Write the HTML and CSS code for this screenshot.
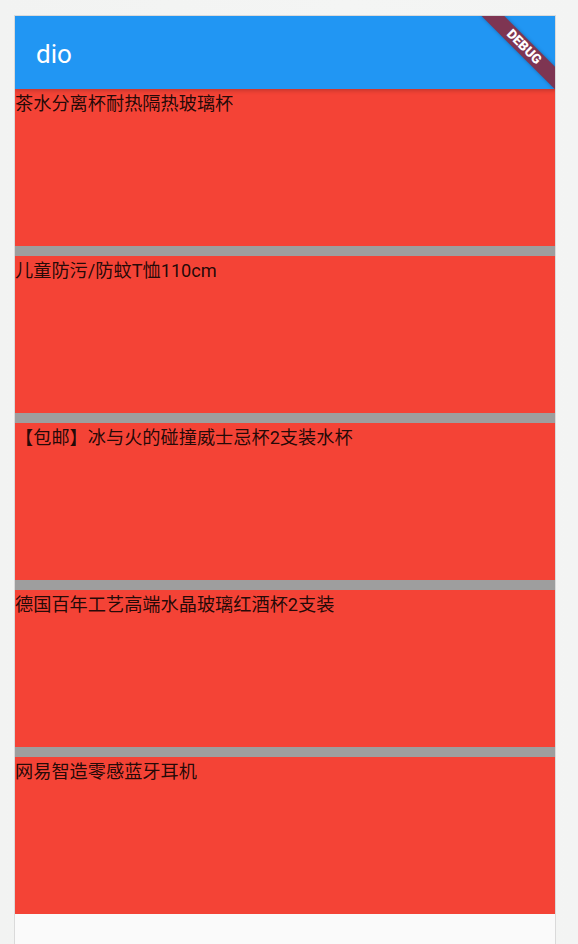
FILE: index.html
```html
<!DOCTYPE html>
<html lang="zh">
<head>
<meta charset="utf-8">
<title>dio</title>
<link rel="stylesheet" href="styles.css">
</head>
<body>
<div class="device">
  <div class="screen">
    <header class="appbar"><span class="title">dio</span></header>
    <ul class="list">
      <li class="item"><p class="name">茶水分离杯耐热隔热玻璃杯</p></li>
      <li class="item"><p class="name">儿童防污/防蚊T恤110cm</p></li>
      <li class="item"><p class="name">【包邮】冰与火的碰撞威士忌杯2支装水杯</p></li>
      <li class="item"><p class="name">德国百年工艺高端水晶玻璃红酒杯2支装</p></li>
      <li class="item"><p class="name">网易智造零感蓝牙耳机</p></li>
    </ul>
    <div class="banner">DEBUG</div>
  </div>
</div>
</body>
</html>
```

FILE: styles.css
```css
html, body {
  margin: 0;
  padding: 0;
  height: 100%;
}
body {
  background: linear-gradient(to right, #f2f3f2 0%, #f4f5f4 60%, #f3f4f3 100%);
  overflow: hidden;
}
.device {
  padding: 15px 0 0 14px;
}
.screen {
  position: relative;
  overflow: hidden;
  width: 540px;
  height: 930px;
  border: 1px solid #dadada;
  border-bottom: none;
  background: #fafafa;
}
.appbar {
  box-sizing: border-box;
  height: 72.5px;
  background: #2196f3;
  padding: 22.5px 0 0 21px;
  box-shadow: 0 2px 4px rgba(0, 0, 0, 0.18);
  position: relative;
  z-index: 1;
}
.title {
  font-family: Roboto, "Noto Sans", sans-serif;
  font-size: 26px;
  font-weight: 400;
  color: #ffffff;
  line-height: normal;
}
.list {
  list-style: none;
  margin: 0;
  padding: 0;
}
.item {
  height: 157px;
  background: #f44336;
}
.item + .item {
  border-top: 10px solid #9e9e9e;
}
.name {
  margin: 0;
  padding-top: 2px;
  font-family: Roboto, "Noto Sans CJK SC", sans-serif;
  font-size: 18.2px;
  line-height: 26.4px;
  color: rgba(0, 0, 0, 0.87);
}
.banner {
  position: absolute;
  left: 456.8px;
  top: 23.4px;
  width: 104px;
  height: 15.6px;
  line-height: 15.6px;
  transform: rotate(45deg);
  background: #7e3552;
  box-shadow: 0 0 4px rgba(0, 0, 0, 0.3);
  color: #ffffff;
  font-family: Roboto, "Noto Sans", sans-serif;
  font-size: 13.3px;
  font-weight: 900;
  text-align: center;
  z-index: 2;
}
```
